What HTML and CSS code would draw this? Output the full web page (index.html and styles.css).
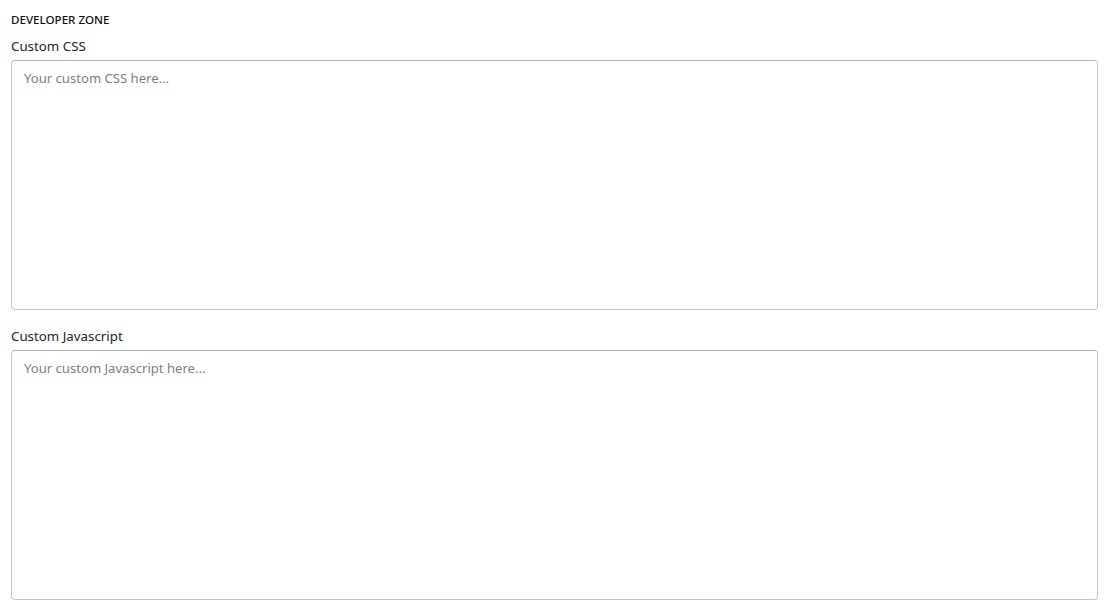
FILE: index.html
```html
<!DOCTYPE html>
<html>
<head>
<meta charset="utf-8">
<link rel="stylesheet" href="styles.css">
</head>
<body>
<div class="zone">
  <h6 class="zone-title">DEVELOPER ZONE</h6>
  <div class="field">
    <label class="field-label">Custom CSS</label>
    <textarea class="field-input" placeholder="Your custom CSS here..."></textarea>
  </div>
  <div class="field">
    <label class="field-label">Custom Javascript</label>
    <textarea class="field-input" placeholder="Your custom Javascript here..."></textarea>
  </div>
</div>
</body>
</html>
```
FILE: styles.css
```css
html, body {
  margin: 0;
  padding: 0;
  background: #fff;
}
body {
  font-family: "Noto Sans", "Open Sans", sans-serif;
  color: #212529;
}
.zone {
  padding: 12px 6px 0 11px;
  display: flex;
  flex-direction: column;
}
.zone-title {
  margin: 0 0 8px 0;
  font-size: 11.6px;
  line-height: 16px;
  font-weight: 500;
  color: #111;
}
.field {
  display: flex;
  flex-direction: column;
  margin-bottom: 16px;
}
.field-label {
  font-size: 13.3px;
  line-height: 20px;
  margin-bottom: 4px;
  color: #212529;
}
.field-input {
  box-sizing: border-box;
  height: 250px;
  width: 100%;
  resize: none;
  border: 1px solid #c4c6c9;
  border-top-color: #b3b5b8;
  border-radius: 4px;
  padding: 8px 12px;
  font-family: inherit;
  font-size: 13.1px;
  line-height: 18px;
  color: #495057;
  outline: none;
}
.field-input::placeholder {
  color: #7b8086;
}
```
